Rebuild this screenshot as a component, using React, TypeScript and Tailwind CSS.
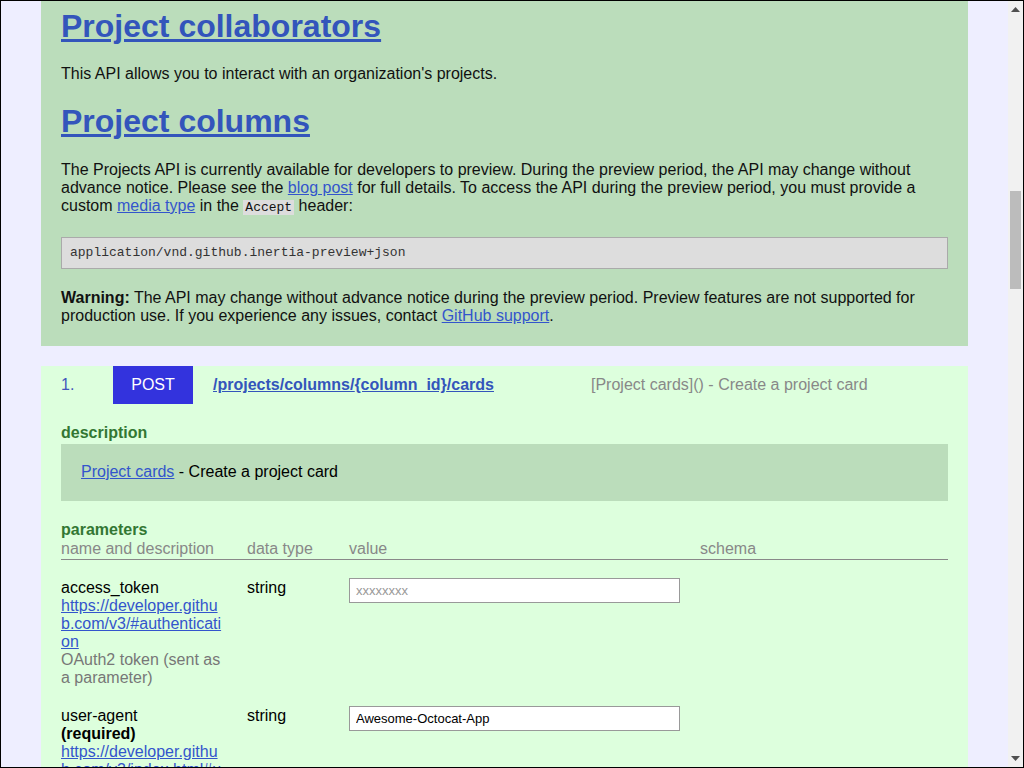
import React from "react";

const sans = "font-['Liberation_Sans',Arial,sans-serif]";
const mono = "font-['Liberation_Mono','Courier_New',monospace]";

function Scrollbar() {
  return (
    <div className="w-[15px] shrink-0 bg-[#f1f1f1] flex flex-col items-center">
      <div className="h-[17px] flex items-center justify-center">
        <svg width="9" height="5" viewBox="0 0 9 5">
          <path d="M0 5 L4.5 0 L9 5 Z" fill="#505050" />
        </svg>
      </div>
      <div className="mt-[173px] w-[11px] h-[98px] bg-[#bcbcbc]" />
      <div className="flex-1" />
      <div className="h-[17px] flex items-center justify-center">
        <svg width="9" height="5" viewBox="0 0 9 5">
          <path d="M0 0 L9 0 L4.5 5 Z" fill="#505050" />
        </svg>
      </div>
    </div>
  );
}

function ParamRow({
  name,
  required,
  link,
  desc,
  value,
  placeholder,
}: {
  name: string;
  required?: boolean;
  link: string;
  desc?: string;
  value?: string;
  placeholder?: string;
}) {
  return (
    <div className="grid grid-cols-[186px_102px_351px_1fr] leading-[18px]">
      <div className="pr-[20px]">
        <div className="text-black">{name}</div>
        {required && <div className="font-bold text-black">(required)</div>}
        <a href="#" className="block text-[#3355cc] underline break-all">
          {link}
        </a>
        {desc && <div className="text-[#777]">{desc}</div>}
      </div>
      <div className="text-black">string</div>
      <div className="-mt-[1px]">
        <input
          className={`w-[331px] h-[25px] bg-white border border-[#999] px-[6px] text-[13px] text-black placeholder:text-[#999] outline-none ${sans}`}
          defaultValue={value}
          placeholder={placeholder}
        />
      </div>
      <div />
    </div>
  );
}

export default function App() {
  return (
    <div className={`w-[1024px] h-[768px] border border-black flex overflow-hidden bg-[#eeeeff] text-[16px] ${sans}`}>
      <div className="flex-1 overflow-hidden pl-[40px] pr-[40px]">
        {/* Projects intro */}
        <section className="bg-[#bbddbb] px-[20px] pt-[7px] pb-[21px] text-[#111]">
          <h1 className="text-[32px] leading-[37px] font-bold">
            <a href="#" className="text-[#3355bb] underline">Project collaborators</a>
          </h1>
          <p className="mt-[20px] leading-[18px]">This API allows you to interact with an organization's projects.</p>
          <h2 className="mt-[20px] text-[32px] leading-[37px] font-bold">
            <a href="#" className="text-[#3355bb] underline">Project columns</a>
          </h2>
          <p className="mt-[21px] leading-[18px]">
            The Projects API is currently available for developers to preview. During the preview period, the API may change without
            advance notice. Please see the{" "}
            <a href="#" className="text-[#3355cc] underline">blog post</a> for full details. To access the API during the preview
            period, you must provide a custom{" "}
            <a href="#" className="text-[#3355cc] underline">media type</a> in the{" "}
            <code className={`bg-[#dddddd] px-[2px] text-[13px] ${mono}`}>Accept</code> header:
          </p>
          <pre className={`mt-[20px] h-[32px] flex items-center bg-[#dddddd] border border-[#aaaaaa] px-[8px] text-[13px] text-[#333] ${mono}`}>
            application/vnd.github.inertia-preview+json
          </pre>
          <p className="mt-[20px] leading-[18px]">
            <strong>Warning:</strong> The API may change without advance notice during the preview period. Preview features are not
            supported for production use. If you experience any issues, contact{" "}
            <a href="#" className="text-[#3355cc] underline">GitHub support</a>.
          </p>
        </section>

        {/* Endpoint */}
        <section className="mt-[20px] bg-[#ddffdd] px-[20px] pb-[40px]">
          <div className="flex items-center h-[38px]">
            <span className="w-[52px] text-[#4455bb]">1.</span>
            <span className="w-[80px] h-[38px] flex items-center justify-center bg-[#3333dd] text-white">POST</span>
            <a href="#" className="ml-[20px] w-[378px] font-bold text-[#3355bb] underline">/projects/columns/{"{column_id}"}/cards</a>
            <span className="text-[#888]">[Project cards]() - Create a project card</span>
          </div>

          <div className="mt-[20px] leading-[18px] font-bold text-[#337733]">description</div>
          <div className="mt-[2px] bg-[#bbddbb] px-[20px] pt-[19px] pb-[20px] leading-[18px] text-black">
            <a href="#" className="text-[#3355cc] underline">Project cards</a> - Create a project card
          </div>

          <div className="mt-[20px] leading-[18px] font-bold text-[#337733]">parameters</div>
          <div className="mt-[1px] grid grid-cols-[186px_102px_351px_1fr] leading-[18px] text-[#888] border-b border-[#888] pb-[1px]">
            <span>name and description</span>
            <span>data type</span>
            <span>value</span>
            <span>schema</span>
          </div>

          <div className="mt-[19px] flex flex-col gap-[20px]">
            <ParamRow
              name="access_token"
              link="https://developer.github.com/v3/#authentication"
              desc="OAuth2 token (sent as a parameter)"
              placeholder="xxxxxxxx"
            />
            <ParamRow
              name="user-agent"
              required
              link="https://developer.github.com/v3/index.html#user-agent-required"
              value="Awesome-Octocat-App"
            />
          </div>
        </section>
      </div>
      <Scrollbar />
    </div>
  );
}
